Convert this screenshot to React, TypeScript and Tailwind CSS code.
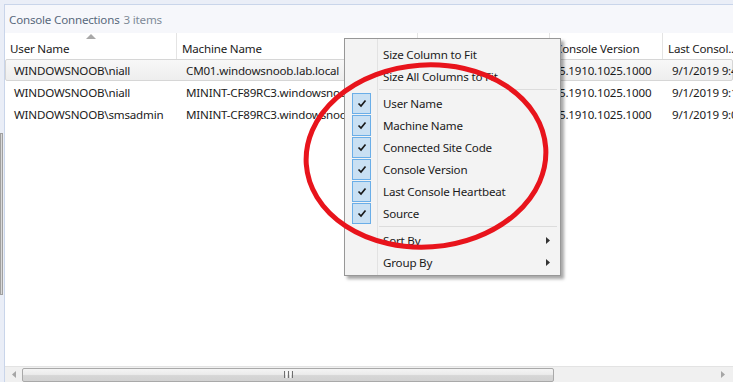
import React from 'react';

const font = { fontFamily: '"Noto Sans", "Open Sans", sans-serif' };

const columns = [
  { title: 'User Name', width: 'w-[172px]' },
  { title: 'Machine Name', width: 'w-[241px]' },
  { title: 'Connected Site Code', width: 'w-[132px]' },
  { title: 'Console Version', width: 'w-[113px]' },
  { title: 'Last Consol...', width: 'w-[120px]' },
];

const rows = [
  ['WINDOWSNOOB\\niall', 'CM01.windowsnoob.lab.local', 'PS1', '5.1910.1025.1000', '9/1/2019 9:41 AM'],
  ['WINDOWSNOOB\\niall', 'MININT-CF89RC3.windowsnoob.lab.local', 'PS1', '5.1910.1025.1000', '9/1/2019 9:12 AM'],
  ['WINDOWSNOOB\\smsadmin', 'MININT-CF89RC3.windowsnoob.lab.local', 'PS1', '5.1910.1025.1000', '9/1/2019 9:05 AM'],
];

const checkedItems = [
  'User Name',
  'Machine Name',
  'Connected Site Code',
  'Console Version',
  'Last Console Heartbeat',
  'Source',
];

const Check: React.FC = () => (
  <svg width="10" height="9" viewBox="0 0 10 9">
    <path d="M1.5 4.5 L4 7 L8.5 1.5" fill="none" stroke="#1a1a1a" strokeWidth="1.7" />
  </svg>
);

const MenuItem: React.FC<{ label: string; checked?: boolean; submenu?: boolean }> = ({ label, checked, submenu }) => (
  <div className="flex h-[22px] items-center">
    <div className="flex w-[31px] shrink-0 items-center justify-center pl-[2px]">
      {checked && (
        <div className="flex h-[21px] w-[19px] items-center justify-center border border-[#6aaee8] bg-[#c9e0f3]">
          <Check />
        </div>
      )}
    </div>
    <div className="flex-1 pl-[7px] pt-[2px] text-[11.6px] tracking-[-0.2px] text-[#1b1b1b]">{label}</div>
    {submenu && (
      <svg width="4" height="7" viewBox="0 0 4 7" className="mr-[10px]">
        <path d="M0 0 L4 3.5 L0 7 Z" fill="#333" />
      </svg>
    )}
  </div>
);

const Separator: React.FC = () => (
  <div className="flex h-[5px] items-center">
    <div className="w-[31px] shrink-0" />
    <div className="ml-[3px] mr-[3px] h-px flex-1 bg-[#dcdcdc]" />
  </div>
);

const ContextMenu: React.FC = () => (
  <div className="absolute left-[344px] top-[38px] w-[217px] border border-[#979797] bg-[#f3f3f3] pb-[2px] pt-[4px] shadow-[3px_3px_3px_rgba(0,0,0,0.35)]">
    <div className="absolute bottom-0 left-[32px] top-0 w-px bg-[#e2e2e2]" />
    <MenuItem label="Size Column to Fit" />
    <MenuItem label="Size All Columns to Fit" />
    <Separator />
    {checkedItems.map((item) => (
      <MenuItem key={item} label={item} checked />
    ))}
    <Separator />
    <MenuItem label="Sort By" submenu />
    <MenuItem label="Group By" submenu />
  </div>
);

const HorizontalScrollbar: React.FC = () => (
  <div className="flex h-[16px] shrink-0 items-center border-t border-[#e3e3e3] bg-[#f0f0f0]">
    <div className="flex w-[17px] shrink-0 justify-center">
      <svg width="4" height="7" viewBox="0 0 4 7">
        <path d="M4 0 L0 3.5 L4 7 Z" fill="#a6a6a6" />
      </svg>
    </div>
    <div className="flex h-[14px] w-[532px] items-center justify-center rounded-[2px] border border-[#a9a9a9] bg-[linear-gradient(#f4f4f4_0%,#ececec_45%,#d6d6d6_55%,#d2d2d2_100%)]">
      <div className="flex gap-[1px]">
        <div className="h-[7px] w-px bg-[#6f6f6f]" />
        <div className="h-[7px] w-px bg-[#f8f8f8]" />
        <div className="h-[7px] w-px bg-[#6f6f6f]" />
        <div className="h-[7px] w-px bg-[#f8f8f8]" />
        <div className="h-[7px] w-px bg-[#6f6f6f]" />
      </div>
    </div>
    <div className="flex-1" />
    <div className="flex w-[12px] shrink-0 justify-start">
      <svg width="4" height="7" viewBox="0 0 4 7">
        <path d="M0 0 L4 3.5 L0 7 Z" fill="#a6a6a6" />
      </svg>
    </div>
  </div>
);

const App: React.FC = () => {
  return (
    <div className="relative h-[382px] w-[733px] overflow-hidden bg-[#eaeef7]" style={font}>
      <div className="flex h-full flex-col">
        <div className="h-[4px] shrink-0" />
        <div className="flex min-h-0 flex-1">
          {/* left pane edge */}
          <div className="flex w-[4px] shrink-0 flex-col">
            <div className="h-[129px] shrink-0" />
            <div className="h-[162px] w-[3px] border border-[#a0a0a0] bg-[#d9d9d9]" />
          </div>

          <div className="flex min-w-0 flex-1 flex-col overflow-hidden border-l border-t border-[#c9d5ea] bg-white">
            {/* title */}
            <div className="flex h-[28px] shrink-0 items-center bg-[#f6f7fb] pl-[4px] pt-[2px] text-[11.6px] tracking-[-0.2px]">
              <span className="text-[#58697b]">Console Connections</span>
              <span className="ml-[4px] text-[#7f8b98]">3 items</span>
            </div>

            {/* column header */}
            <div className="relative flex h-[26px] shrink-0 whitespace-nowrap">
              {columns.map((col) => (
                <div
                  key={col.title}
                  className={`${col.width} flex shrink-0 items-end overflow-hidden border-r border-[#e4e4e4] pb-[2px] pl-[5px] text-[11.6px] tracking-[-0.2px] text-[#1b1b1b]`}
                >
                  {col.title}
                </div>
              ))}
              <svg width="10" height="5" viewBox="0 0 10 5" className="absolute left-[81px] top-[1px]">
                <path d="M0 5 L5 0 L10 5 Z" fill="#a8a8a8" />
              </svg>
            </div>

            {/* rows */}
            <div className="flex-1">
              {rows.map((row, i) => (
                <div
                  key={i}
                  className={`flex h-[22px] items-center whitespace-nowrap pt-[1px] text-[11.6px] tracking-[-0.2px] text-[#1b1b1b] ${
                    i === 0
                      ? 'rounded-[2px] border border-[#d6d6d6] bg-[linear-gradient(#f8f8f8,#eeeeee)]'
                      : 'border border-transparent'
                  }`}
                >
                  {row.map((cell, j) => (
                    <div key={j} className={`${columns[j].width} shrink-0 overflow-hidden pl-[8px]`}>
                      {cell}
                    </div>
                  ))}
                </div>
              ))}
            </div>

            <HorizontalScrollbar />
          </div>
        </div>
      </div>

      <ContextMenu />

      {/* red annotation */}
      <svg className="pointer-events-none absolute left-0 top-0" width="733" height="382">
        <ellipse cx="426" cy="156" rx="120" ry="91" fill="none" stroke="#e8141c" strokeWidth="5" transform="rotate(-4 426 156)" />
      </svg>
    </div>
  );
};

export default App;
